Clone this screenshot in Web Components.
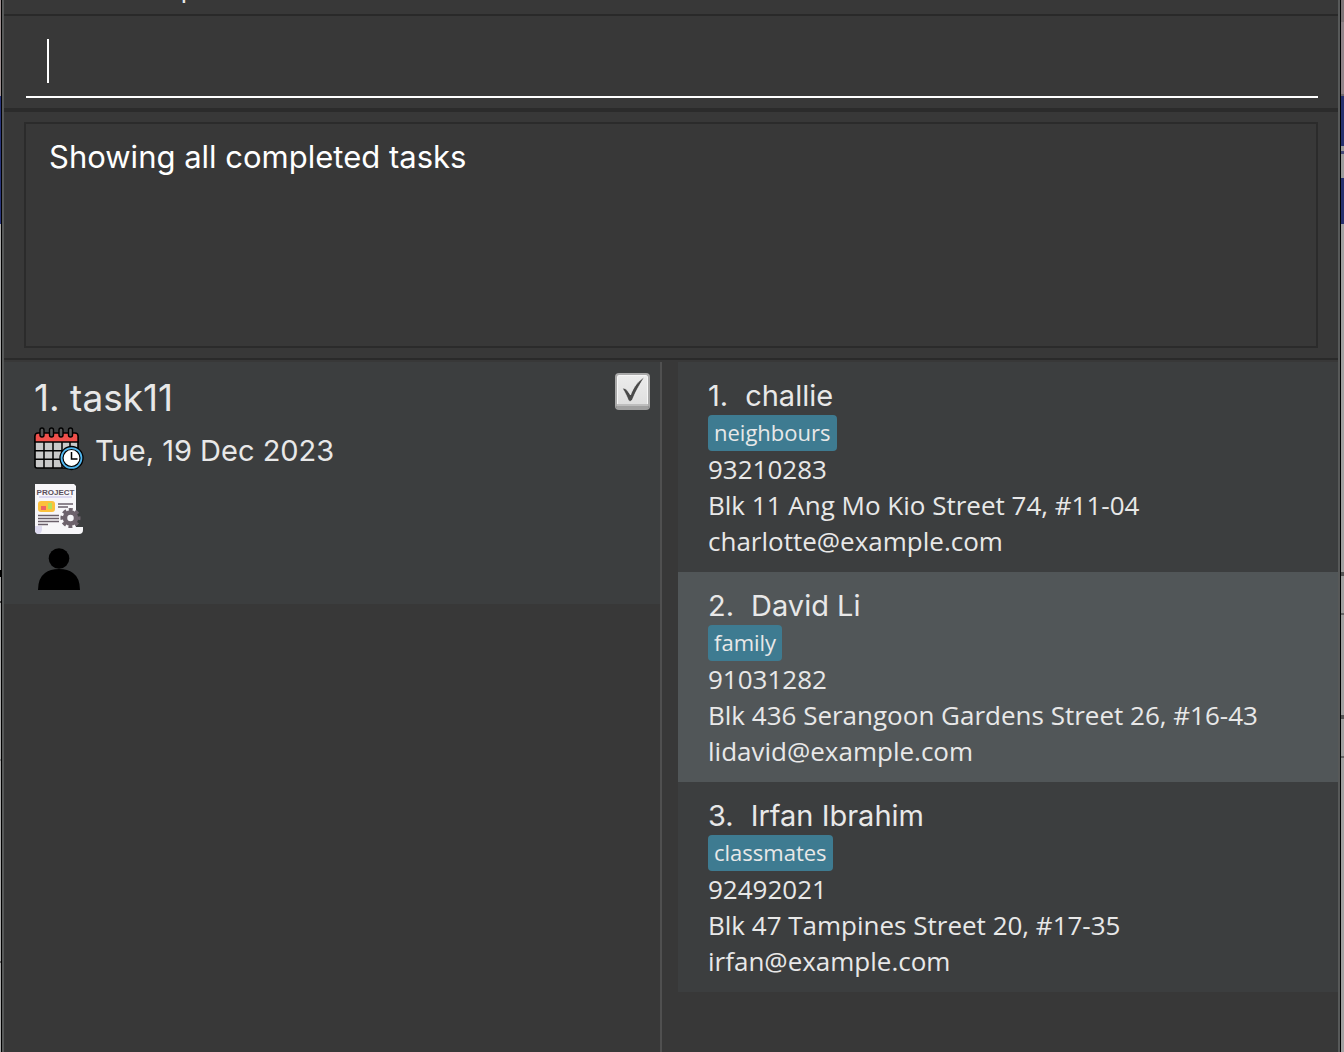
<!DOCTYPE html>
<html lang="en">
<head>
<meta charset="utf-8">
<title>Task and contact manager</title>
<style>
html, body { height: 100%; margin: 0; }
body { background: #383838; font-family: Inter, "Liberation Sans", sans-serif; color: #e8e8e8; overflow: hidden; }
</style>
</head>
<body>
<app-window>
  <menu-strip slot="top"></menu-strip>
  <command-box slot="top"></command-box>
  <result-display slot="top" text="Showing all completed tasks"></result-display>
  <task-card slot="tasks" heading="1. task11" date="Tue, 19 Dec 2023"></task-card>
  <person-card slot="people" index="1." name="challie" tag="neighbours" phone="93210283" address="Blk 11 Ang Mo Kio Street 74, #11-04" email="charlotte@example.com"></person-card>
  <person-card slot="people" class="alt" index="2." name="David Li" tag="family" phone="91031282" address="Blk 436 Serangoon Gardens Street 26, #16-43" email="lidavid@example.com"></person-card>
  <person-card slot="people" index="3." name="Irfan Ibrahim" tag="classmates" phone="92492021" address="Blk 47 Tampines Street 20, #17-35" email="irfan@example.com"></person-card>
</app-window>
<script>
class Base extends HTMLElement {
  connectedCallback() {
    if (this.shadowRoot) return;
    this.attachShadow({ mode: 'open' }).innerHTML = '<style>:host, * { box-sizing: border-box; }</style>' + this.render();
  }
  at(name) { return this.getAttribute(name) || ''; }
}

customElements.define('app-window', class extends Base {
  render() { return `
<style>
:host { display: flex; height: 100%; }
.edge { flex: none; }
.left { width: 1px; background: linear-gradient(#9c8f90 96px, #29357a 96px 224px, #a9a9a9 224px 570px, #000 570px 577px, #a9a9a9 577px 601px, #444 601px 603px, #a9a9a9 603px 759px, #808080 759px 761px, #a9a9a9 761px 961px, #606060 961px 963px, #a9a9a9 963px); }
.right { width: 3px; background: linear-gradient(#7f7578 22px, #92858a 22px 94px, #70686c 94px 96px, #27316f 96px 146px, #9c9c9c 146px 151px, #454a78 151px 154px, #9c9c9c 154px 178px, #27316f 178px 224px, #a2a2a2 224px 572px, #555 572px 576px, #a2a2a2 576px 613px, #666 613px 615px, #a2a2a2 615px 715px, #555 715px 719px, #a2a2a2 719px 756px, #666 756px 758px, #a2a2a2 758px); }
.frame { flex: 1; min-width: 0; display: flex; flex-direction: column; border: solid #000; border-width: 0 1px; }
.inner { flex: 1; min-height: 0; display: flex; flex-direction: column; border: solid #575959; border-width: 0 2px; background: #383838; }
.lists { flex: 1; min-height: 0; display: flex; padding-top: 2px; }
.tasks { flex: 164; min-width: 0; border-right: 2px solid #505050; }
.people { flex: 165; min-width: 0; padding-left: 16px; }
</style>
<div class="edge left"></div>
<div class="frame"><div class="inner">
  <slot name="top"></slot>
  <div class="lists">
    <section class="tasks" aria-label="Tasks"><slot name="tasks"></slot></section>
    <section class="people" aria-label="Contacts"><slot name="people"></slot></section>
  </div>
</div></div>
<div class="edge right"></div>`; }
});

customElements.define('menu-strip', class extends Base {
  render() { return `
<style>
:host { display: flex; align-items: flex-end; height: 16px; padding: 0 20px 9px 120px; border-bottom: 2px solid #292929; overflow: hidden; }
button { all: unset; box-sizing: border-box; padding: 0 16px; font: 26px/32px Inter, sans-serif; color: #e8e8e8; }
</style><button>Help</button>`; }
});

customElements.define('command-box', class extends Base {
  render() { return `
<style>
:host { display: block; padding: 10px 20px 10px 22px; border-bottom: 4px solid #2b2b2b; }
div { display: flex; align-items: center; height: 72px; padding: 0 20px; border-bottom: 2px solid #fff; }
i { width: 2px; height: 44px; margin-left: 1px; background: #fff; }
input { flex: 1; min-width: 0; height: 44px; border: 0; padding: 0; outline: 0; background: none; color: #fff; font: 31px Inter, sans-serif; }
</style><div><i></i><input type="text" aria-label="Command"></div>`; }
});

customElements.define('result-display', class extends Base {
  render() { return `
<style>
:host { display: block; padding: 10px 20px; border-bottom: 2px solid #2a2a2a; }
textarea { display: block; width: 100%; height: 226px; padding: 12px 23px; border: 2px solid #2b2b2b; border-radius: 0; outline: 0; resize: none; background: none; color: #fff; font: 31px/42px Inter, sans-serif; overflow: hidden; }
</style><textarea readonly aria-label="Result">${this.at('text')}</textarea>`; }
});

customElements.define('task-card', class extends Base {
  render() { return `
<style>
:host { display: flex; justify-content: space-between; align-items: flex-start; height: 242px; padding: 11px 10px 10px 30px; background: #3c3e3f; }
h2 { margin: 0; font: 37px/50px Inter, sans-serif; }
.row { display: flex; align-items: center; gap: 11px; height: 60px; font-size: 29px; line-height: 40px; }
.row svg { width: 50px; height: 50px; display: block; }
.date { height: 56px; }
label { display: grid; width: 35px; height: 37px; }
label > * { grid-area: 1 / 1; }
input { appearance: none; margin: 0; width: 35px; height: 37px; border: 2px solid #a9a9a9; border-bottom: 4px solid #a0a0a0; border-radius: 4px; background: linear-gradient(#ececec, #dedede); box-shadow: inset 0 -2px #bdbdbd, inset 0 0 0 1px #f6f6f6; }
label svg { pointer-events: none; z-index: 1; }
</style>
<div>
  <h2>${this.at('heading')}</h2>
  <div class="row date">
    <svg viewBox="0 0 50 50" aria-hidden="true">
      <rect x="1" y="9" width="43" height="33" rx="2" fill="#c9c9c9" stroke="#000" stroke-width="1.6"/>
      <path d="M1 16V10q0-3 3-3h37q3 0 3 3v6z" fill="#f0504b" stroke="#000" stroke-width="1.4"/>
      <path d="M1 24.800H44M1 33.300H44M10 16V42M19 16V42M28 16V42M36 16V42" stroke="#000" stroke-width="1.500" fill="none"/>
      <g fill="#555" stroke="#000" stroke-width="1.400"><rect x="6" y="2" width="4" height="9" rx="2"/><rect x="15.500" y="2" width="4" height="9" rx="2"/><rect x="25" y="2" width="4" height="9" rx="2"/><rect x="34.500" y="2" width="4" height="9" rx="2"/></g>
      <circle cx="37.500" cy="32" r="11.500" fill="#51b7f0" stroke="#000" stroke-width="1.300"/>
      <circle cx="37.500" cy="32" r="8.500" fill="#fff" stroke="#000" stroke-width="1.200"/>
      <path d="M37.500 26v7h6" fill="none" stroke="#000" stroke-width="1.500"/>
    </svg>
    <span>${this.at('date')}</span>
  </div>
  <div class="row">
    <svg viewBox="0 0 50 50" aria-hidden="true">
      <path d="M1 0H40l2 2V43h7v3q0 4-4 4H5q-4 0-4-4z" fill="#f7f6f9"/>
      <path d="M1 42h7v4q-1 4-4 4-3-1-3-4z" fill="#dddaf0"/>
      <path d="M5 13H38" stroke="#dcd9f0" stroke-width="2"/>
      <text x="21.500" y="10.500" text-anchor="middle" font-family="Liberation Sans, sans-serif" font-size="8" font-weight="700" fill="#5a505c">PROJECT</text>
      <rect x="4" y="17" width="17" height="11" rx="3" fill="#fcc13c"/><path d="M7 22h5v4H7z" fill="#ee6464"/><path d="M14 19h4v6h-4z" fill="#b6e05a"/>
      <path d="M24 20H39M24 23h10M4 31.500H25M4 34.500H25M4 37.500H25M4 40.500H14" stroke="#6b606b" stroke-width="1.400"/>
      <circle cx="36.500" cy="34" r="5.500" fill="none" stroke="#6d626c" stroke-width="4.500"/>
      <circle cx="36.500" cy="34" r="8.300" fill="none" stroke="#6d626c" stroke-width="3.500" stroke-dasharray="3.800 2.719" stroke-dashoffset="1.900"/>
    </svg>
  </div>
  <div class="row">
    <svg viewBox="0 0 50 50" aria-hidden="true"><circle cx="25" cy="14.500" r="10.300"/><path d="M4 46q0-12 7-17 5-4 14-4t14 4q7 5 7 17z"/></svg>
  </div>
</div>
<label><input type="checkbox" checked aria-label="Completed"><svg viewBox="0 0 35 37" aria-hidden="true"><path d="M7.500 15.500c3-1 5 2 8 6.500C18.500 14 23 8 29.500 4c-5 8-8 13-12 22.500-2 2.500-3 2.500-4.500 0-1.500-4-3.500-8-5.500-11z" fill="#4a4a4a" stroke="#fff" stroke-width=".6"/></svg></label>`; }
});

customElements.define('person-card', class extends Base {
  render() { return `
<style>
:host { display: flex; flex-direction: column; align-items: flex-start; height: 210px; padding: 15px 10px 10px 30px; background: #3c3e3f; font: 26px/36px "Open Sans", sans-serif; white-space: nowrap; }
:host(.alt) { background: #515658; }
h3 { display: flex; gap: 17px; margin: 0; font: 29px/38px Inter, sans-serif; }
.tag { height: 36px; padding: 0 6px; border-radius: 4px; background: #3e7b91; font-size: 22px; line-height: 35px; }
p { margin: 0; }
</style>
<h3><span>${this.at('index')}</span><span>${this.at('name')}</span></h3>
<span class="tag">${this.at('tag')}</span>
<p>${this.at('phone')}</p><p>${this.at('address')}</p><p>${this.at('email')}</p>`; }
});
</script>
</body>
</html>
